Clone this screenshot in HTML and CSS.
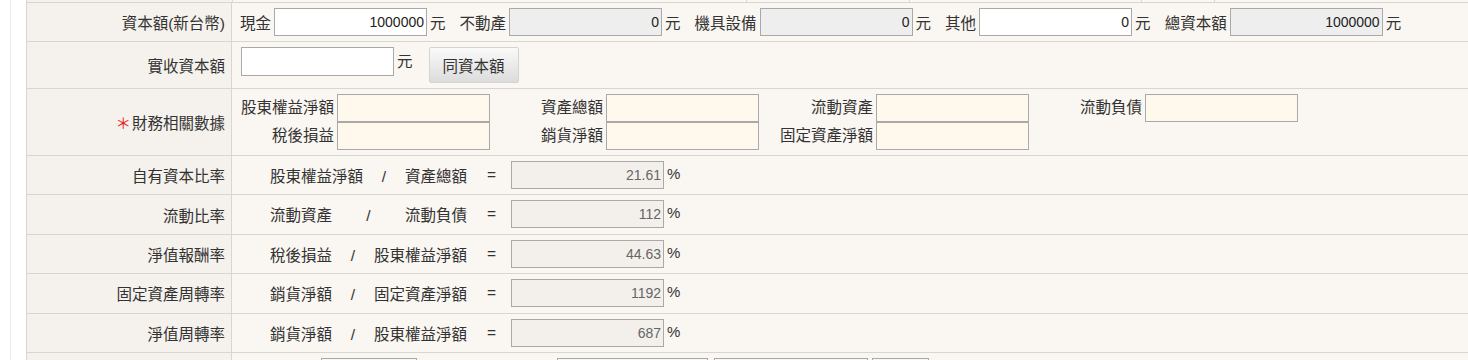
FILE: index.html
```html
<!DOCTYPE html>
<html>
<head>
    <title>資本額及財務數據</title>
    <link rel="stylesheet" href="styles.css">
</head>
<body>
    <div class="page">
        <div class="sheet">
            <!-- tail of the previous row -->
            <div class="stub">
                <span class="stub-cell w-label"></span>
                <span class="stub-cell w-a"></span>
                <span class="stub-cell w-b"></span>
                <span class="stub-cell w-c"></span>
                <span class="stub-cell w-d"></span>
            </div>

            <!-- 資本額 -->
            <div class="row">
                <div class="label">資本額(新台幣)</div>
                <div class="field field-line">
                    <span class="name">現金</span><input class="box" value="1000000"><span class="unit">元</span>
                    <span class="name">不動產</span><input class="box readonly" value="0" readonly><span class="unit">元</span>
                    <span class="name">機具設備</span><input class="box readonly" value="0" readonly><span class="unit">元</span>
                    <span class="name">其他</span><input class="box" value="0"><span class="unit">元</span>
                    <span class="name">總資本額</span><input class="box readonly" value="1000000" readonly><span class="unit">元</span>
                </div>
            </div>

            <!-- 實收資本額 -->
            <div class="row">
                <div class="label">實收資本額</div>
                <div class="field field-paid">
                    <input class="box tall" value=""><span class="unit">元</span>
                    <button class="btn">同資本額</button>
                </div>
            </div>

            <!-- 財務相關數據 -->
            <div class="row">
                <div class="label"><span class="req">＊</span>財務相關數據</div>
                <div class="field">
                    <div class="finance">
                        <span class="fin-name">股東權益淨額</span><input class="box cream">
                        <span class="fin-name">資產總額</span><input class="box cream">
                        <span class="fin-name">流動資產</span><input class="box cream">
                        <span class="fin-name">流動負債</span><input class="box cream">
                        <span class="fin-name">稅後損益</span><input class="box cream">
                        <span class="fin-name">銷貨淨額</span><input class="box cream">
                        <span class="fin-name">固定資產淨額</span><input class="box cream">
                    </div>
                </div>
            </div>

            <!-- 比率 -->
            <div class="row ratio-row">
                <div class="label">自有資本比率</div>
                <div class="field field-ratio">
                    <div class="formula"><span>股東權益淨額</span><span>/</span><span>資產總額</span></div>
                    <span class="eq">=</span>
                    <input class="box ratio" value="21.61" readonly><span class="pct">%</span>
                </div>
            </div>
            <div class="row ratio-row">
                <div class="label">流動比率</div>
                <div class="field field-ratio">
                    <div class="formula"><span>流動資產</span><span>/</span><span>流動負債</span></div>
                    <span class="eq">=</span>
                    <input class="box ratio" value="112" readonly><span class="pct">%</span>
                </div>
            </div>
            <div class="row ratio-row">
                <div class="label">淨值報酬率</div>
                <div class="field field-ratio">
                    <div class="formula"><span>稅後損益</span><span>/</span><span>股東權益淨額</span></div>
                    <span class="eq">=</span>
                    <input class="box ratio" value="44.63" readonly><span class="pct">%</span>
                </div>
            </div>
            <div class="row ratio-row">
                <div class="label">固定資產周轉率</div>
                <div class="field field-ratio">
                    <div class="formula"><span>銷貨淨額</span><span>/</span><span>固定資產淨額</span></div>
                    <span class="eq">=</span>
                    <input class="box ratio" value="1192" readonly><span class="pct">%</span>
                </div>
            </div>
            <div class="row ratio-row">
                <div class="label">淨值周轉率</div>
                <div class="field field-ratio">
                    <div class="formula"><span>銷貨淨額</span><span>/</span><span>股東權益淨額</span></div>
                    <span class="eq">=</span>
                    <input class="box ratio" value="687" readonly><span class="pct">%</span>
                </div>
            </div>

            <!-- next row, cut off by the window -->
            <div class="row">
                <div class="label">&nbsp;</div>
                <div class="field field-next">
                    <input class="box next-a">
                    <input class="box next-b">
                    <input class="box next-c">
                    <input class="box next-d">
                </div>
            </div>
        </div>
    </div>
</body>
</html>
```

FILE: styles.css
```css
body {
    margin: 0;
    font-family: 'Liberation Sans', 'Noto Sans CJK TC', sans-serif;
    font-size: 15.5px;
    color: #333;
    background: #fff;
    overflow: hidden;
}
.page {
    margin-left: 10px;
    padding-left: 15px;
    border-left: 1px solid #ececec;
    min-height: 100vh;
}
.sheet {
    border-left: 1px solid #d9d5d0;
}
.stub {
    display: flex;
    height: 2px;
    border-bottom: 1px solid #d9d5d0;
    background: #faf6f1;
}
.stub-cell {
    border-right: 1px solid #d9d5d0;
}
.w-label { width: 205px; background: #f5f1ec; }
.w-a { width: 513px; }
.w-b { width: 162px; }
.w-c { width: 231px; }
.w-d { width: 72px; }

.row {
    display: flex;
    border-bottom: 1px solid #d9d5d0;
    background: #faf6f1;
}
.label {
    width: 205px;
    flex: none;
    display: flex;
    align-items: center;
    justify-content: flex-end;
    padding-right: 6px;
    box-sizing: border-box;
    background: #f5f1ec;
    border-right: 1px solid #d9d5d0;
}
.req {
    color: #e8231b;
    margin-right: 1px;
}
.field {
    flex: 1;
    display: flex;
    align-items: center;
    padding: 5px 0 5px 8px;
}

.box {
    box-sizing: border-box;
    width: 153px;
    height: 28px;
    margin: 0;
    padding: 0 2px;
    border: 1px solid #a9a9a9;
    border-radius: 0;
    background: #fff;
    font-family: 'Liberation Sans', sans-serif;
    font-size: 14px;
    color: #222;
    text-align: right;
    outline: none;
}
.box.readonly {
    background: #eeeeee;
}
.box.cream {
    background: #fff8ec;
}
.box.tall {
    height: 29px;
    margin-left: 1px;
}
.name {
    margin-right: 3px;
}
.unit {
    margin-left: 3px;
    margin-right: 14px;
}

.field-paid {
    align-items: flex-start;
}
.field-paid .unit {
    line-height: 29px;
    margin-right: 16px;
}
.btn {
    height: 36px;
    width: 90px;
    padding: 0;
    border: 1px solid #d4d4d4;
    border-radius: 2px;
    background: linear-gradient(#fafafa, #dcdcdc);
    font-family: 'Liberation Sans', 'Noto Sans CJK TC', sans-serif;
    font-size: 15.5px;
    color: #333;
}

.finance {
    display: grid;
    grid-template-columns: 100px 153px 116px 153px 117px 153px 116px 153px;
    grid-auto-rows: 28px;
    margin-left: -3px;
}
.fin-name {
    text-align: right;
    padding-right: 3px;
    line-height: 28px;
    white-space: nowrap;
}

.ratio-row .field {
    padding: 5px 0 5.4px 38px;
}
.formula {
    width: 197px;
    display: flex;
    align-items: baseline;
    justify-content: space-between;
}
.eq {
    margin-left: 20px;
    margin-right: 15px;
}
.box.ratio {
    background: #f3f0ec;
    color: #666;
}
.pct {
    margin-left: 3px;
    margin-top: -3px;
    font-size: 15px;
}

.field-next {
    align-items: flex-start;
}
.box.next-a { width: 96px; margin-left: 81px; background: #faf6f1; }
.box.next-b { width: 151px; margin-left: 140px; background: #faf6f1; }
.box.next-c { width: 154px; margin-left: 6px; background: #faf6f1; }
.box.next-d { width: 57px; margin-left: 4px; background: #faf6f1; }
```
